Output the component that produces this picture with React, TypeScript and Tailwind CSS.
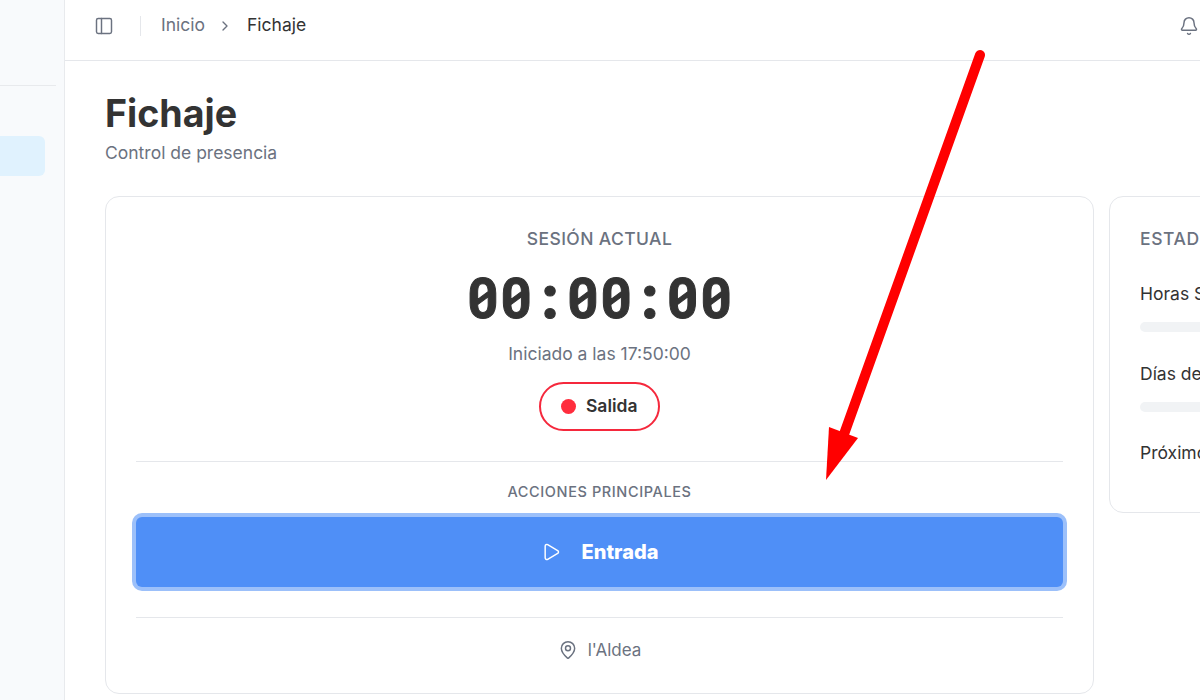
import { Bell, ChevronRight, MapPin, PanelLeft, Play } from "lucide-react";

const inter = "font-['Inter',sans-serif]";

function StatRow({ label, bar }: { label: string; bar?: boolean }) {
  return (
    <div className="flex flex-col">
      <div className="h-[26px] text-[17.5px] leading-[26px] text-[#333333] whitespace-nowrap">{label}</div>
      {bar ? <div className="mt-[15px] h-[10px] w-full rounded-full bg-[#f1f3f5]" /> : null}
    </div>
  );
}

export default function App() {
  return (
    <div className={`relative flex h-[700px] w-[1200px] overflow-hidden bg-white ${inter}`}>
      <aside className="flex h-full w-[65px] shrink-0 flex-col border-r border-[#e8eaed] bg-[#f8fafc]">
        <div className="h-[86px] w-[56px] shrink-0 border-b border-[#e8eaed]" />
        <div className="mt-[50px] h-[40px] w-[45px] rounded-r-[6px] bg-[#e0f2fe]" />
      </aside>

      <div className="flex min-w-0 flex-1 flex-col">
        <header className="flex h-[61px] shrink-0 items-center border-b border-[#e5e7eb] pb-[9px] pl-[29px] pr-[1px]">
          <PanelLeft size={20} strokeWidth={1.75} className="text-[#6b7280]" />
          <div className="ml-[26px] h-[20px] w-px bg-[#e5e7eb]" />
          <span className="ml-[20px] text-[17.5px] text-[#6b7280]">Inicio</span>
          <ChevronRight size={16} strokeWidth={2} className="ml-[12px] text-[#6b7280]" />
          <span className="ml-[14px] text-[17.5px] text-[#333333]">Fichaje</span>
          <Bell size={20} strokeWidth={1.75} className="ml-auto text-[#6b7280]" />
        </header>

        <main className="flex flex-col pl-[40px] pt-[28px]">
          <h1 className="text-[37.6px] font-bold leading-[50px] text-[#333333]">Fichaje</h1>
          <p className="mt-[1px] text-[17.5px] leading-[26px] text-[#6b7280]">Control de presencia</p>

          <div className="mt-[30px] flex items-start gap-[15px]">
            <section className="flex h-[498px] w-[989px] shrink-0 flex-col items-center rounded-[14px] border border-[#e5e7eb] bg-white px-[30px] pt-[30px]">
              <div className="text-[17.5px] font-medium leading-[24px] tracking-[0.4px] text-[#6b7280]">SESIÓN ACTUAL</div>
              <div className="mt-[13px] font-['Roboto_Mono','DejaVu_Sans_Mono',monospace] text-[55.5px] font-bold leading-[66px] text-[#333333] [-webkit-text-stroke:1px_#333333]">00:00:00</div>
              <div className="mt-[11px] text-[17.5px] leading-[26px] text-[#6b7280]">Iniciado a las 17:50:00</div>
              <div className="mt-[15px] flex h-[49px] items-center gap-[9.5px] rounded-full border-2 border-[#f5283c] bg-white px-[20.5px]">
                <span className="h-[15px] w-[15px] rounded-full bg-[#ff2d3d]" />
                <span className="text-[17.5px] font-semibold text-[#333333]">Salida</span>
              </div>
              <div className="mt-[30px] h-px w-full shrink-0 bg-[#e5e7eb]" />
              <div className="mt-[20px] text-[14.5px] font-medium leading-[20px] tracking-[0.6px] text-[#6b7280]">ACCIONES PRINCIPALES</div>
              <button className="mt-[15px] flex h-[70px] w-full shrink-0 items-center justify-center gap-[21px] rounded-[6px] bg-[#4f8ff7] text-[20px] font-extrabold text-white shadow-[0_0_0_4px_#9cc0fa]">
                <Play size={20} strokeWidth={1.75} />
                <span>Entrada</span>
              </button>
              <div className="mt-[30px] h-px w-full shrink-0 bg-[#e5e7eb]" />
              <div className="mt-[19px] flex items-center gap-[10px] text-[17px] leading-[26px] text-[#6b7280]">
                <MapPin size={20} strokeWidth={1.75} />
                <span>l'Aldea</span>
              </div>
            </section>

            <section className="flex h-[317px] w-[400px] shrink-0 flex-col rounded-[14px] border border-[#e5e7eb] bg-white px-[30px] pt-[30px]">
              <div className="text-[17.5px] font-medium leading-[24px] tracking-[0.6px] text-[#6b7280]">ESTADÍSTICAS</div>
              <div className="mt-[30px]"><StatRow label="Horas Semanales" bar /></div>
              <div className="mt-[29px]"><StatRow label="Días de Trabajo" bar /></div>
              <div className="mt-[28px]"><StatRow label="Próximo Turno" /></div>
            </section>
          </div>
        </main>
      </div>

      <svg className="pointer-events-none absolute left-0 top-0" width="1200" height="700" viewBox="0 0 1200 700">
        <line x1="980" y1="55" x2="843" y2="437" stroke="#ff0000" strokeWidth="10" strokeLinecap="round" />
        <polygon points="829,427 858,438 826,480" fill="#ff0000" />
      </svg>
    </div>
  );
}
